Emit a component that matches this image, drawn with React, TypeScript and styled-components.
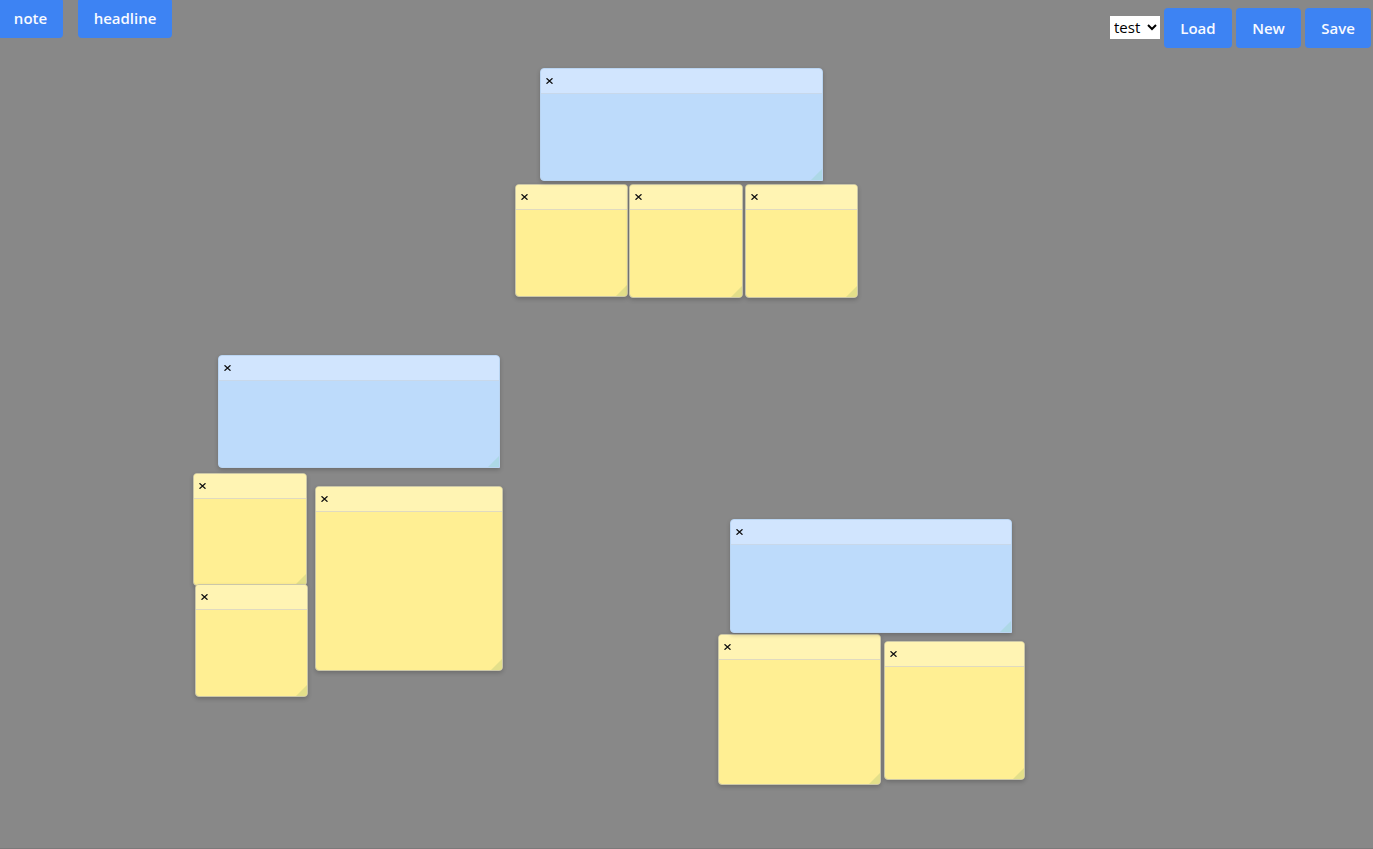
import React from "react";
import styled, { createGlobalStyle } from "styled-components";

const GlobalStyle = createGlobalStyle`
  *, *::before, *::after { box-sizing: border-box; }
  body {
    margin: 0;
    background: #888888;
    font-family: "Open Sans", "Noto Sans", sans-serif;
    overflow: hidden;
  }
`;

const Board = styled.main`
  position: relative;
  min-height: 100vh;
  border-bottom: 1px solid #7b7b7b;
`;

const Toolbar = styled.header`
  display: flex;
  justify-content: space-between;
  align-items: flex-start;
`;

const CreateTools = styled.div`
  display: flex;
  gap: 15px;
  margin: -2px 0 0 -2px;
`;

const FileTools = styled.div`
  display: flex;
  align-items: center;
  gap: 4px;
  padding: 8px 2px 0 0;
`;

const Button = styled.button<{ $width: number }>`
  width: ${(p) => p.$width}px;
  height: 40px;
  padding: 0;
  border: 0;
  border-radius: 4px;
  background: #3d83f3;
  color: #f8faff;
  font: 600 15px/24px "Open Sans", "Noto Sans", sans-serif;
  cursor: pointer;
`;

const BoardSelect = styled.select`
  width: 50px;
  height: 23px;
  margin-bottom: 2px;
  padding: 0;
  border: 0;
  border-radius: 0;
  background: #ffffff;
  color: #000000;
  font: 400 15px/23px "Open Sans", "Noto Sans", sans-serif;
`;

type Kind = "note" | "headline";

const palette = {
  note: { body: "#ffef93", head: "#fff4b3", edge: "#cbc7a8", line: "#e0dac0", grip: "#e3df8a" },
  headline: { body: "#bddbfb", head: "#d1e5fe", edge: "#bad5f2", line: "#c8d8ea", grip: "#add8e6" },
};

const Card = styled.section<{ $kind: Kind; $x: number; $y: number; $w: number; $h: number }>`
  position: absolute;
  left: ${(p) => p.$x}px;
  top: ${(p) => p.$y}px;
  width: ${(p) => p.$w}px;
  height: ${(p) => p.$h}px;
  z-index: ${(p) => (p.$kind === "headline" ? 2 : 1)};
  display: flex;
  flex-direction: column;
  overflow: hidden;
  border: 1px solid ${(p) => palette[p.$kind].edge};
  border-radius: 4px ${(p) => (p.$kind === "headline" ? "4px 0" : "4px 4px")} 4px;
  background: ${(p) => palette[p.$kind].body};
  box-shadow: 0 2px 4px rgba(0, 0, 0, 0.2);
`;

const CardHead = styled.div<{ $kind: Kind }>`
  flex: 0 0 25px;
  display: flex;
  align-items: center;
  padding-left: 3px;
  background: ${(p) => palette[p.$kind].head};
  border-bottom: 1px solid ${(p) => palette[p.$kind].line};
`;

const Close = styled.button`
  display: flex;
  align-items: center;
  justify-content: center;
  width: 11px;
  height: 22px;
  padding: 0;
  border: 0;
  background: transparent;
  color: #111111;
  cursor: pointer;
`;

const CardText = styled.textarea`
  flex: 1;
  min-height: 0;
  padding: 4px;
  border: 0;
  outline: 0;
  resize: none;
  background: transparent;
  font: 400 15px/20px "Open Sans", "Noto Sans", sans-serif;
`;

const Grip = styled.span<{ $kind: Kind }>`
  position: absolute;
  right: 0;
  bottom: 0;
  width: 11px;
  height: 11px;
  background: ${(p) => palette[p.$kind].grip};
  clip-path: polygon(100% 0, 100% 100%, 0 100%);
  cursor: nwse-resize;
`;

const cards: { kind: Kind; x: number; y: number; w: number; h: number }[] = [
  { kind: "headline", x: 540, y: 68, w: 283, h: 113 },
  { kind: "note", x: 515, y: 184, w: 113, h: 113 },
  { kind: "note", x: 629, y: 184, w: 114, h: 114 },
  { kind: "note", x: 745, y: 184, w: 113, h: 114 },
  { kind: "headline", x: 218, y: 355, w: 282, h: 113 },
  { kind: "note", x: 193, y: 473, w: 114, h: 113 },
  { kind: "note", x: 315, y: 486, w: 188, h: 185 },
  { kind: "note", x: 195, y: 584, w: 113, h: 113 },
  { kind: "headline", x: 730, y: 519, w: 282, h: 114 },
  { kind: "note", x: 718, y: 634, w: 163, h: 151 },
  { kind: "note", x: 884, y: 641, w: 141, h: 139 },
];

export default function App() {
  return (
    <>
      <GlobalStyle />
      <Board>
        <Toolbar>
          <CreateTools>
            <Button type="button" $width={65}>note</Button>
            <Button type="button" $width={94}>headline</Button>
          </CreateTools>
          <FileTools>
            <BoardSelect aria-label="Board" defaultValue="test">
              <option value="test">test</option>
            </BoardSelect>
            <Button type="button" $width={68}>Load</Button>
            <Button type="button" $width={65}>New</Button>
            <Button type="button" $width={66}>Save</Button>
          </FileTools>
        </Toolbar>
        {cards.map((c, i) => (
          <Card key={i} $kind={c.kind} $x={c.x} $y={c.y} $w={c.w} $h={c.h}>
            <CardHead $kind={c.kind}>
              <Close type="button" aria-label={`Delete ${c.kind}`}>
                <svg width="7" height="6" viewBox="0 0 7 6" aria-hidden="true">
                  <path d="M0.5 0.3L6.5 5.7M6.5 0.3L0.5 5.7" stroke="currentColor" strokeWidth="1.3" />
                </svg>
              </Close>
            </CardHead>
            <CardText aria-label={`${c.kind} text`} />
            <Grip $kind={c.kind} />
          </Card>
        ))}
      </Board>
    </>
  );
}
